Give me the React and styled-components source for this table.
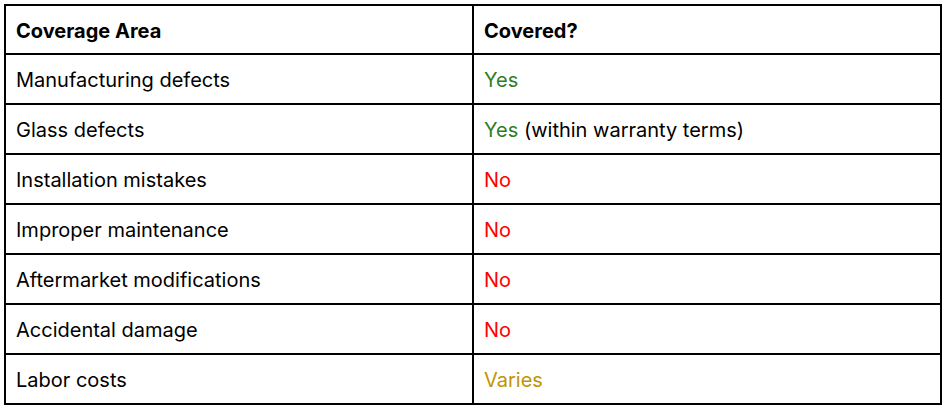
import React from "react";
import styled, { createGlobalStyle } from "styled-components";

const Global = createGlobalStyle`
  html, body { margin: 0; padding: 0; background: #fff; }
  body { font-family: Inter, "Noto Sans", sans-serif; }
`;

const Page = styled.div`
  padding: 4px 5px 0 4px;
`;

const Table = styled.table`
  width: 938px;
  border-collapse: collapse;
  border: 2px solid #000;
  font-size: 20px;
  color: #000;
`;

const Cell = styled.td`
  border: 2px solid #000;
  height: ${(p) => (p.$head ? "45px" : "46px")};
  padding: 2px 10px 0;
  text-align: left;
  vertical-align: middle;
  font-weight: ${(p) => (p.$head ? 700 : 400)};
  width: ${(p) => (p.$first ? "446px" : "auto")};
`;

const Status = styled.span`
  color: ${(p) => p.$c};
`;

const colors = { Yes: "#2f7d1f", No: "#ff0000", Varies: "#c29400" };

const rows = [
  ["Manufacturing defects", "Yes"],
  ["Glass defects", "Yes", " (within warranty terms)"],
  ["Installation mistakes", "No"],
  ["Improper maintenance", "No"],
  ["Aftermarket modifications", "No"],
  ["Accidental damage", "No"],
  ["Labor costs", "Varies"],
];

export default function App() {
  return (
    <Page>
      <Global />
      <Table>
        <thead>
          <tr>
            <Cell as="th" $head $first>Coverage Area</Cell>
            <Cell as="th" $head>Covered?</Cell>
          </tr>
        </thead>
        <tbody>
          {rows.map(([a, s, extra]) => (
            <tr key={a}>
              <Cell $first>{a}</Cell>
              <Cell>
                <Status $c={colors[s]}>{s}</Status>
                {extra}
              </Cell>
            </tr>
          ))}
        </tbody>
      </Table>
    </Page>
  );
}
